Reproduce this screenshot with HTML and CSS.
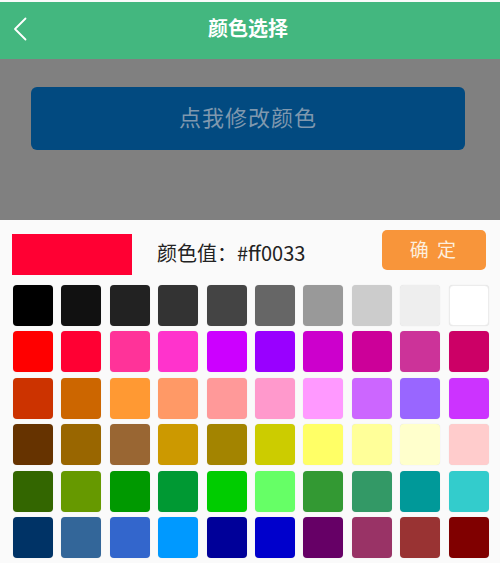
FILE: index.html
```html
<!DOCTYPE html>
<html lang="zh-CN">
<head>
<meta charset="utf-8">
<title>颜色选择</title>
<link rel="stylesheet" href="styles.css">
</head>
<body>
<header class="nav">
  <span class="back">
    <svg width="14" height="24" viewBox="0 0 14 24"><path d="M12.5 1.5 L2 12 L12.5 22.5" fill="none" stroke="#fff" stroke-width="1.8" stroke-linecap="round" stroke-linejoin="round"/></svg>
  </span>
  <h1 class="title">颜色选择</h1>
</header>
<section class="stage">
  <button class="change">点我修改颜色</button>
</section>
<section class="panel">
  <div class="toprow">
    <div class="preview"></div>
    <div class="value">颜色值：#ff0033</div>
    <button class="ok">确 定</button>
  </div>
  <div class="grid">
    <i style="background:#000000"></i><i style="background:#111111"></i><i style="background:#222222"></i><i style="background:#333333"></i><i style="background:#444444"></i><i style="background:#666666"></i><i style="background:#999999"></i><i style="background:#cccccc"></i><i style="background:#eeeeee"></i><i class="light" style="background:#ffffff"></i>
    <i style="background:#ff0000"></i><i style="background:#ff0033"></i><i style="background:#ff3399"></i><i style="background:#ff33cc"></i><i style="background:#cc00ff"></i><i style="background:#9900ff"></i><i style="background:#cc00cc"></i><i style="background:#cc0099"></i><i style="background:#cc3399"></i><i style="background:#cc0066"></i>
    <i style="background:#cc3300"></i><i style="background:#cc6600"></i><i style="background:#ff9933"></i><i style="background:#ff9966"></i><i style="background:#ff9999"></i><i style="background:#ff99cc"></i><i style="background:#ff99ff"></i><i style="background:#cc66ff"></i><i style="background:#9966ff"></i><i style="background:#cc33ff"></i>
    <i style="background:#663300"></i><i style="background:#996600"></i><i style="background:#996633"></i><i style="background:#cc9900"></i><i style="background:#a38400"></i><i style="background:#cccc00"></i><i style="background:#ffff66"></i><i style="background:#ffff99"></i><i style="background:#ffffcc"></i><i style="background:#ffcccc"></i>
    <i style="background:#336600"></i><i style="background:#669900"></i><i style="background:#009900"></i><i style="background:#009933"></i><i style="background:#00cc00"></i><i style="background:#66ff66"></i><i style="background:#339933"></i><i style="background:#339966"></i><i style="background:#009999"></i><i style="background:#33cccc"></i>
    <i style="background:#003366"></i><i style="background:#336699"></i><i style="background:#3366cc"></i><i style="background:#0099ff"></i><i style="background:#000099"></i><i style="background:#0000cc"></i><i style="background:#660066"></i><i style="background:#993366"></i><i style="background:#993333"></i><i style="background:#800000"></i>
  </div>
</section>
</body>
</html>
```
FILE: styles.css
```css
* { box-sizing: border-box; }
html, body { margin: 0; padding: 0; }
body {
  width: 500px;
  height: 563px;
  overflow: hidden;
  background: #fafafa;
  padding-top: 2px;
  font-family: "Noto Sans CJK SC", "Noto Sans", sans-serif;
}
.nav {
  position: relative;
  height: 57px;
  background: #43b77f;
  display: flex;
  align-items: center;
  justify-content: center;
  padding-bottom: 6px;
}
.back {
  position: absolute;
  left: 13px;
  top: 15px;
  display: block;
  width: 14px;
  height: 24px;
}
.back svg { display: block; }
.title {
  margin: 0;
  color: #fff;
  font-size: 20px;
  font-weight: 700;
  line-height: 24px;
  margin-left: -4px;
}
.stage {
  height: 161px;
  background: #808080;
  padding: 28px 35px 0 31px;
}
.change {
  display: block;
  width: 100%;
  height: 63px;
  border: none;
  border-radius: 6px;
  background: #024a80;
  color: #7f98ae;
  font-family: inherit;
  font-size: 22px;
  line-height: 26px;
  letter-spacing: 1px;
  padding: 0 0 6px 0;
}
.panel {
  background: #fafafa;
  padding: 9px 0 0 0;
}
.toprow {
  display: flex;
  align-items: flex-start;
  height: 46px;
  padding-left: 12px;
}
.preview {
  width: 120px;
  height: 41px;
  margin-top: 5px;
  background: #ff0033;
}
.value {
  margin-left: 25px;
  margin-top: 10px;
  font-size: 20px;
  line-height: 28px;
  color: #222;
}
.ok {
  margin-left: auto;
  margin-right: 14px;
  margin-top: 1px;
  width: 104px;
  height: 40px;
  border: none;
  border-radius: 5px;
  background: #f8953a;
  color: #fdeedd;
  font-family: inherit;
  font-size: 19px;
  line-height: 24px;
  padding: 0 0 3px 0;
  letter-spacing: 2px;
}
.grid {
  margin-top: 10px;
  padding-left: 13px;
  display: grid;
  grid-template-columns: repeat(10, 40px);
  grid-auto-rows: 41px;
  column-gap: 8.4px;
  row-gap: 5.4px;
}
.grid i {
  display: block;
  border-radius: 4px;
  box-shadow: 0 0 1px rgba(0,0,0,0.15);
}
.grid i.light {
  border: 1px solid #ececec;
}
```
